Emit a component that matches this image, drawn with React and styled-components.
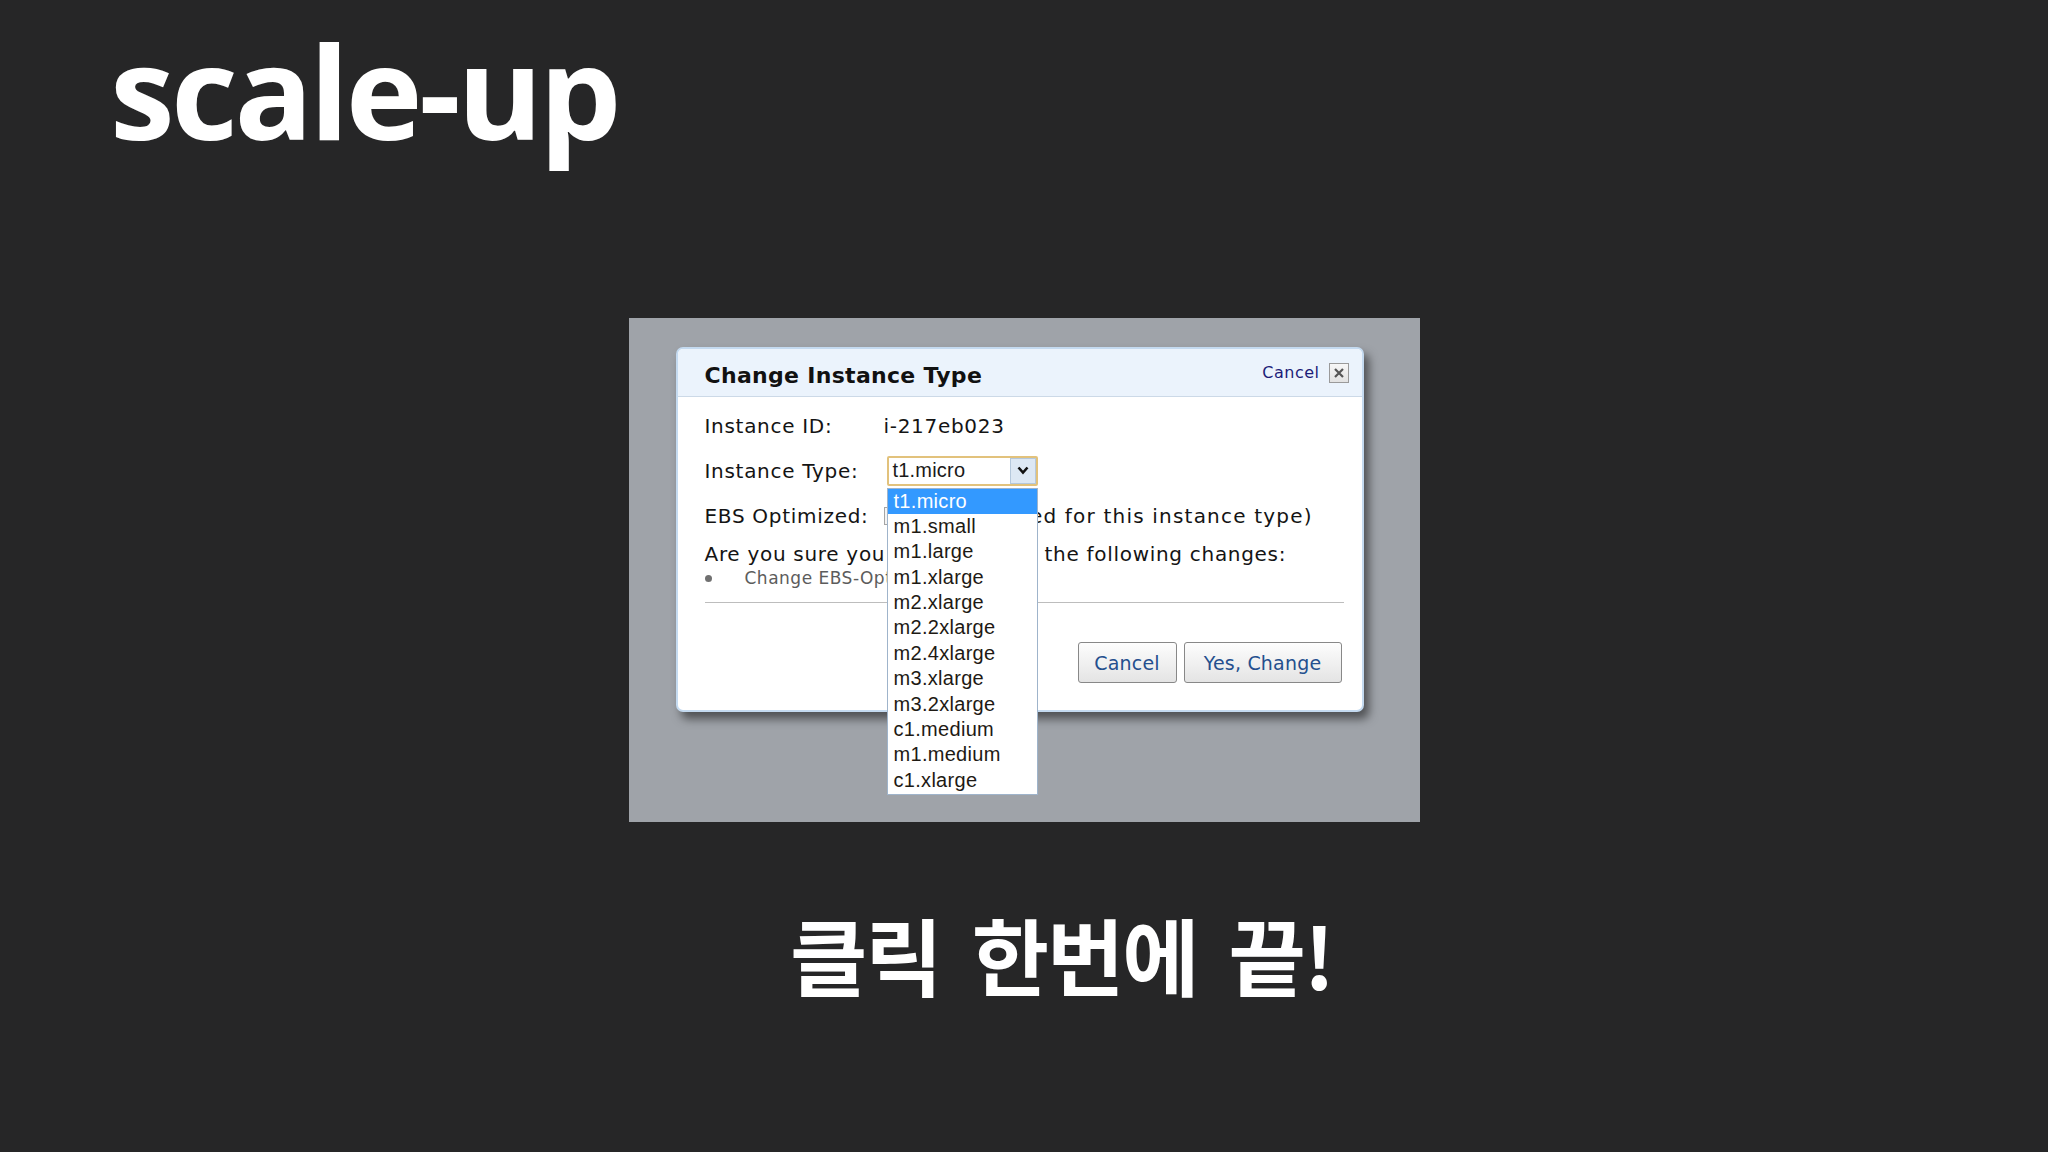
import React from 'react';
import styled, { createGlobalStyle } from 'styled-components';

const GlobalStyle = createGlobalStyle`
    html, body {
        margin: 0;
        padding: 0;
        background: #262627;
    }
`

const Page = styled.div`
    display: flex;
    flex-direction: column;
    min-height: 1152px;
    padding-top: 25px;
    box-sizing: border-box;
    background: #262627;
`

const Title = styled.h1`
    margin: 0 0 0 110px;
    font-family: "Open Sans", "Noto Sans", sans-serif;
    font-weight: 700;
    font-size: 130px;
    line-height: 1;
    letter-spacing: -3.5px;
    color: #ffffff;
`

const Shot = styled.div`
    align-self: center;
    width: 791px;
    height: 504px;
    margin-top: 163px;
    padding: 29px 0 0 47px;
    box-sizing: border-box;
    background: #9fa3a9;
`

const Dialog = styled.div`
    width: 688px;
    box-sizing: border-box;
    background: #ffffff;
    border: 2px solid #c4daf0;
    border-radius: 7px;
    box-shadow: 5px 7px 10px rgba(0, 0, 0, 0.5);
    font-family: "DejaVu Sans", Verdana, sans-serif;
    color: #141414;
`

const Header = styled.div`
    display: flex;
    align-items: center;
    justify-content: space-between;
    height: 47px;
    padding: 0 13px 0 27px;
    background: #ebf3fc;
    border-bottom: 1px solid #ccd9e7;
    border-radius: 5px 5px 0 0;
    h2{
        margin: 0;
        padding-top: 6px;
        font-size: 22px;
        font-weight: 700;
        letter-spacing: 0.3px;
        color: #111;
    }
`

const HeaderCancel = styled.div`
    display: flex;
    align-items: center;
    gap: 9px;
    span{
        font-size: 16px;
        letter-spacing: 0.5px;
        color: #1c1c78;
    }
`

const CloseBox = styled.div`
    display: flex;
    align-items: center;
    justify-content: center;
    width: 20px;
    height: 20px;
    box-sizing: border-box;
    border: 1px solid #9a9a9a;
    background: linear-gradient(#f7f7f7, #e2e2e2);
`

const Body = styled.div`
    padding: 6px 18px 27px 27px;
    font-size: 20px;
    letter-spacing: 0.7px;
`

const Row = styled.div`
    display: flex;
    align-items: center;
    height: 45px;
    white-space: nowrap;
`

const Label = styled.span`
    flex: none;
    width: 179px;
`

const Note = styled.span`
    letter-spacing: 1.2px;
`

const SelectWrap = styled.div`
    position: relative;
    margin-left: 3px;
`

const SelectBox = styled.div`
    display: flex;
    align-items: center;
    width: 151px;
    height: 30px;
    box-sizing: border-box;
    border: 2px solid #e2c27c;
    border-radius: 2px;
    background: #fff;
    font-family: "Liberation Sans", Arial, sans-serif;
    font-size: 20px;
    letter-spacing: 0.2px;
    span{
        flex: 1;
        padding-left: 4px;
        color: #1a1a1a;
    }
`

const ArrowBox = styled.div`
    display: flex;
    align-items: center;
    justify-content: center;
    width: 26px;
    height: 26px;
    box-sizing: border-box;
    border: 1px solid #b5c8dc;
    background: #dde8f4;
`

const List = styled.ul`
    position: absolute;
    top: calc(100% + 2px);
    left: 0;
    z-index: 2;
    width: 151px;
    height: 307px;
    margin: 0;
    padding: 0;
    box-sizing: border-box;
    list-style: none;
    background: #fff;
    border: 1px solid #9fb4cb;
    font-family: "Liberation Sans", Arial, sans-serif;
    font-size: 20px;
    letter-spacing: 0.3px;
`

const Option = styled.li`
    height: 25.4px;
    line-height: 25.4px;
    padding-left: 6px;
    background: ${p => p.selected ? '#3399ff' : 'transparent'};
    color: ${p => p.selected ? '#ffffff' : '#1e1a14'};
`

const Check = styled.span`
    flex: none;
    width: 6px;
    height: 18px;
    box-sizing: border-box;
    border: 1px solid #a5a5a5;
    background: #f4f4f4;
`

const Question = styled.div`
    margin-top: 3px;
    height: 26px;
    line-height: 26px;
    white-space: nowrap;
`

const BulletLine = styled.div`
    display: flex;
    align-items: center;
    height: 22px;
    font-size: 17px;
    letter-spacing: 0.5px;
    color: #5c5c5c;
    white-space: nowrap;
`

const Dot = styled.span`
    flex: none;
    width: 7px;
    height: 7px;
    margin: 0 33px 0 0;
    border-radius: 50%;
    background: #707070;
`

const Divider = styled.hr`
    margin: 13px 0 0 0;
    border: none;
    border-top: 1px solid #bdbdbd;
`

const Buttons = styled.div`
    display: flex;
    justify-content: flex-end;
    gap: 7px;
    margin-top: 39px;
    padding-right: 2px;
`

const Button = styled.button`
    width: ${p => p.w}px;
    height: 41px;
    padding: 0;
    box-sizing: border-box;
    border: 1px solid #888;
    border-radius: 3px;
    background: linear-gradient(#fdfdfd, #e4e4e4);
    font-family: "DejaVu Sans", Verdana, sans-serif;
    font-size: 19px;
    letter-spacing: 0.2px;
    color: #244f8e;
`

const Caption = styled.p`
    margin: 90px 0 0 790px;
    font-family: "Noto Sans CJK KR", "Noto Sans", sans-serif;
    font-weight: 700;
    font-size: 84px;
    line-height: 1;
    letter-spacing: -2px;
    word-spacing: 14px;
    color: #ffffff;
    white-space: nowrap;
`

const types = [
    't1.micro', 'm1.small', 'm1.large', 'm1.xlarge', 'm2.xlarge', 'm2.2xlarge',
    'm2.4xlarge', 'm3.xlarge', 'm3.2xlarge', 'c1.medium', 'm1.medium', 'c1.xlarge'
]

export default function App() {
    return (
        <Page>
            <GlobalStyle />
            <Title>scale-up</Title>
            <Shot>
                <Dialog>
                    <Header>
                        <h2>Change Instance Type</h2>
                        <HeaderCancel>
                            <span>Cancel</span>
                            <CloseBox>
                                <svg width="12" height="12" viewBox="0 0 12 12">
                                    <path d="M2 2 L10 10 M10 2 L2 10" stroke="#555" strokeWidth="2.2" />
                                </svg>
                            </CloseBox>
                        </HeaderCancel>
                    </Header>
                    <Body>
                        <Row>
                            <Label>Instance ID:</Label>
                            <span>i-217eb023</span>
                        </Row>
                        <Row>
                            <Label>Instance Type:</Label>
                            <SelectWrap>
                                <SelectBox>
                                    <span>t1.micro</span>
                                    <ArrowBox>
                                        <svg width="12" height="9" viewBox="0 0 12 9">
                                            <path d="M1.5 1.5 L6 6.5 L10.5 1.5" fill="none" stroke="#111" strokeWidth="2.6" />
                                        </svg>
                                    </ArrowBox>
                                </SelectBox>
                                <List>
                                    {types.map((t, i) => (
                                        <Option key={t} selected={i === 0}>{t}</Option>
                                    ))}
                                </List>
                            </SelectWrap>
                        </Row>
                        <Row>
                            <Label>EBS Optimized:</Label>
                            <Check />
                            <Note>(Not supported for this instance type)</Note>
                        </Row>
                        <Question>Are you sure you want to make the following changes:</Question>
                        <BulletLine>
                            <Dot />
                            <span>Change EBS-Optimized: No</span>
                        </BulletLine>
                        <Divider />
                        <Buttons>
                            <Button w={99}>Cancel</Button>
                            <Button w={158}>Yes, Change</Button>
                        </Buttons>
                    </Body>
                </Dialog>
            </Shot>
            <Caption>클릭 한번에 끝!</Caption>
        </Page>
    )
}
